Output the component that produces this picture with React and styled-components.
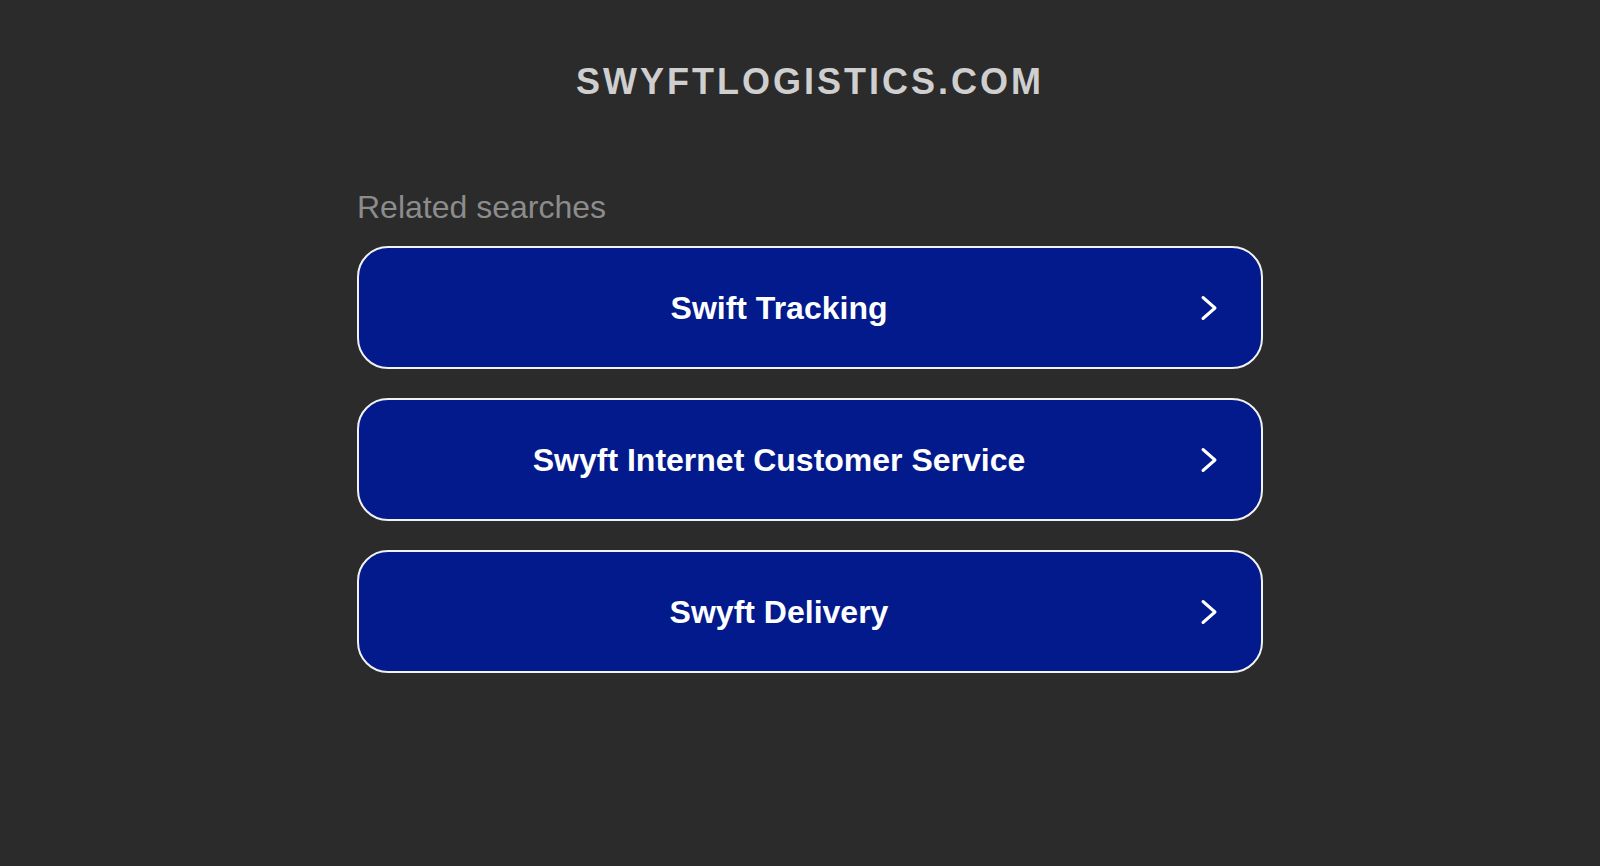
import React from 'react';
import styled, { createGlobalStyle } from 'styled-components';

const GlobalStyle = createGlobalStyle`
  html, body {
    margin: 0;
    padding: 0;
    background: #2b2b2b;
  }
  body {
    font-family: "Liberation Sans", Arial, sans-serif;
  }
`;

const Page = styled.div`
  min-height: 866px;
  box-sizing: border-box;
  padding: 64px 0 0 20px;
  display: flex;
  flex-direction: column;
  align-items: center;
`;

const Domain = styled.h1`
  margin: 0;
  font-size: 36px;
  line-height: 36px;
  font-weight: 700;
  letter-spacing: 3px;
  color: #cfcfcf;
`;

const Searches = styled.section`
  width: 906px;
  margin-top: 91px;
  display: flex;
  flex-direction: column;
`;

const Heading = styled.div`
  font-size: 32px;
  line-height: 32px;
  color: #8c8c8c;
  margin-bottom: 23px;
`;

const List = styled.div`
  display: flex;
  flex-direction: column;
  gap: 29px;
`;

const SearchLink = styled.a`
  box-sizing: border-box;
  height: 123px;
  display: flex;
  align-items: center;
  background: #021a8b;
  border: 2px solid #f2f2f2;
  border-radius: 31px;
  color: #ffffff;
  text-decoration: none;
  cursor: pointer;
`;

const Label = styled.span`
  flex: 1;
  text-align: center;
  font-size: 32px;
  line-height: 32px;
  font-weight: 700;
`;

const Arrow = styled.svg`
  width: 20px;
  height: 26px;
  margin-right: 42px;
  flex-shrink: 0;
`;

const Chevron = () => (
  <Arrow viewBox="0 0 20 26" fill="none">
    <path
      d="M4 2.5 L16 13 L4 23.5"
      stroke="#ffffff"
      strokeWidth="3"
      strokeLinecap="round"
      strokeLinejoin="round"
    />
  </Arrow>
);

const searches = ['Swift Tracking', 'Swyft Internet Customer Service', 'Swyft Delivery'];

export default function App() {
  return (
    <>
      <GlobalStyle />
      <Page>
        <Domain>SWYFTLOGISTICS.COM</Domain>
        <Searches>
          <Heading>Related searches</Heading>
          <List>
            {searches.map((s) => (
              <SearchLink key={s}>
                <Label>{s}</Label>
                <Chevron />
              </SearchLink>
            ))}
          </List>
        </Searches>
      </Page>
    </>
  );
}
